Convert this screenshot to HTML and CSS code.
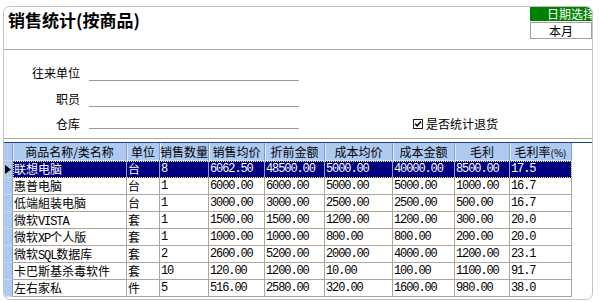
FILE: index.html
```html
<!DOCTYPE html>
<html>
<head>
<meta charset="utf-8">
<link rel="stylesheet" href="styles.css">
</head>
<body>
<div class="frame">
  <div class="top">
    <h1 class="title">销售统计(按商品)</h1>
    <div class="date">
      <div class="date-btn">日期选择</div>
      <div class="date-val">本月</div>
    </div>
  </div>
  <div class="form">
    <div class="frow"><span class="lbl">往来单位</span><span class="field"></span></div>
    <div class="frow r2"><span class="lbl">职员</span><span class="field"></span></div>
    <div class="frow r3"><span class="lbl">仓库</span><span class="field"></span>
      <label class="chk"><svg class="box" width="10" height="10" viewBox="0 0 10 10"><rect x="0.5" y="0.5" width="9" height="9" fill="#fff" stroke="#1a1a1a"/><path d="M2.2 4.8 L4.2 6.9 L7.9 2.6" fill="none" stroke="#000" stroke-width="1.6"/></svg>是否统计退货</label>
    </div>
  </div>
  <div class="grid">
    <div class="row head">
      <div class="ind"></div>
      <div class="cells">
        <div class="c w1">商品名称/类名称</div>
        <div class="c w2">单位</div>
        <div class="c w3">销售数量</div>
        <div class="c w4">销售均价</div>
        <div class="c w5">折前金额</div>
        <div class="c w6">成本均价</div>
        <div class="c w7">成本金额</div>
        <div class="c w8">毛利</div>
        <div class="c w9">毛利率<span class="pct">(%)</span></div>
      </div>
    </div>
    <div class="row sel">
      <div class="ind"><svg width="6" height="9" viewBox="0 0 6 9"><polygon points="0,0 6,4.5 0,9" fill="#000"/></svg></div>
      <div class="cells">
        <div class="c w1">联想电脑</div><div class="c w2">台</div><div class="c w3 n">8</div><div class="c w4 n">6062.50</div><div class="c w5 n">48500.00</div><div class="c w6 n">5000.00</div><div class="c w7 n">40000.00</div><div class="c w8 n">8500.00</div><div class="c w9 n">17.5</div>
      </div>
    </div>
    <div class="row">
      <div class="ind"></div>
      <div class="cells">
        <div class="c w1">惠普电脑</div><div class="c w2">台</div><div class="c w3 n">1</div><div class="c w4 n">6000.00</div><div class="c w5 n">6000.00</div><div class="c w6 n">5000.00</div><div class="c w7 n">5000.00</div><div class="c w8 n">1000.00</div><div class="c w9 n">16.7</div>
      </div>
    </div>
    <div class="row">
      <div class="ind"></div>
      <div class="cells">
        <div class="c w1">低端組装电脑</div><div class="c w2">台</div><div class="c w3 n">1</div><div class="c w4 n">3000.00</div><div class="c w5 n">3000.00</div><div class="c w6 n">2500.00</div><div class="c w7 n">2500.00</div><div class="c w8 n">500.00</div><div class="c w9 n">16.7</div>
      </div>
    </div>
    <div class="row">
      <div class="ind"></div>
      <div class="cells">
        <div class="c w1">微软<span class="lat">VISTA</span></div><div class="c w2">套</div><div class="c w3 n">1</div><div class="c w4 n">1500.00</div><div class="c w5 n">1500.00</div><div class="c w6 n">1200.00</div><div class="c w7 n">1200.00</div><div class="c w8 n">300.00</div><div class="c w9 n">20.0</div>
      </div>
    </div>
    <div class="row">
      <div class="ind"></div>
      <div class="cells">
        <div class="c w1">微软<span class="lat">XP</span>个人版</div><div class="c w2">套</div><div class="c w3 n">1</div><div class="c w4 n">1000.00</div><div class="c w5 n">1000.00</div><div class="c w6 n">800.00</div><div class="c w7 n">800.00</div><div class="c w8 n">200.00</div><div class="c w9 n">20.0</div>
      </div>
    </div>
    <div class="row">
      <div class="ind"></div>
      <div class="cells">
        <div class="c w1">微软<span class="lat">SQL</span>数据库</div><div class="c w2">套</div><div class="c w3 n">2</div><div class="c w4 n">2600.00</div><div class="c w5 n">5200.00</div><div class="c w6 n">2000.00</div><div class="c w7 n">4000.00</div><div class="c w8 n">1200.00</div><div class="c w9 n">23.1</div>
      </div>
    </div>
    <div class="row">
      <div class="ind"></div>
      <div class="cells">
        <div class="c w1">卡巴斯基杀毒软件</div><div class="c w2">套</div><div class="c w3 n">10</div><div class="c w4 n">120.00</div><div class="c w5 n">1200.00</div><div class="c w6 n">10.00</div><div class="c w7 n">100.00</div><div class="c w8 n">1100.00</div><div class="c w9 n">91.7</div>
      </div>
    </div>
    <div class="row">
      <div class="ind"></div>
      <div class="cells">
        <div class="c w1">左右家私</div><div class="c w2">件</div><div class="c w3 n">5</div><div class="c w4 n">516.00</div><div class="c w5 n">2580.00</div><div class="c w6 n">320.00</div><div class="c w7 n">1600.00</div><div class="c w8 n">980.00</div><div class="c w9 n">38.0</div>
      </div>
    </div>
  </div>
</div>
</body>
</html>
```

FILE: styles.css
```css
* { box-sizing: border-box; }
body {
  margin: 0;
  background: #fff;
  font-family: "Noto Sans CJK SC", sans-serif;
  font-size: 12px;
  color: #000;
}
.frame {
  margin: 6px 0 0 3px;
  width: 590px;
  height: 294px;
  border: 1px solid #c4c4c4;
  border-radius: 7px;
  overflow: hidden;
}
.top {
  display: flex;
  justify-content: space-between;
  height: 43px;
  border-bottom: 1px solid #aca899;
}
.title {
  margin: 0;
  padding: 2px 0 0 4px;
  font-size: 17px;
  font-weight: bold;
  line-height: 22px;
}
.date {
  width: 62px;
  display: flex;
  flex-direction: column;
  gap: 1px;
}
.date-btn {
  height: 14px;
  background: #008000;
  color: #fff;
  font-size: 12px;
  line-height: 14px;
  padding-left: 17px;
  white-space: nowrap;
  overflow: hidden;
}
.date-val {
  height: 17px;
  border: 1px solid #a0a0a0;
  text-align: center;
  line-height: 15px;
}
.form {
  height: 89px;
  padding-top: 14px;
  border-bottom: 1px solid #aca899;
}
.frow {
  display: flex;
  align-items: flex-end;
  height: 17px;
}
.r2 { margin-top: 9px; }
.r3 { margin-top: 5px; }
.lbl {
  width: 76px;
  text-align: right;
  line-height: 16px;
}
.r3 .lbl { margin-bottom: -3px; }
.field {
  width: 210px;
  height: 17px;
  margin-left: 9px;
  border-bottom: 1px solid #9b9b9b;
}
.chk {
  margin-left: 114px;
  margin-bottom: -3px;
  display: flex;
  align-items: center;
  gap: 3px;
  line-height: 16px;
}
.grid {
  margin-top: 3px;
  border-top: 1px solid #1f3f8f;
}
.row {
  display: flex;
  height: 17px;
}
.row.head { height: 18px; }
.ind {
  width: 9px;
  flex: none;
  background: #aecaf0;
  border-right: 1px solid #7f9dc9;
  border-bottom: 1px solid #c9dbf3;
  display: flex;
  align-items: center;
  justify-content: center;
}
.cells {
  display: flex;
}
.c {
  flex: none;
  height: 17px;
  padding-left: 1px;
  border-right: 1px solid #aca899;
  border-bottom: 1px solid #aca899;
  line-height: 16px;
  white-space: nowrap;
  overflow: hidden;
}
.head .c {
  height: 18px;
  background: #aecaf0;
  border-right: 1px solid #7f9dc9;
  border-bottom: 1px solid #d2e1f6;
  box-shadow: inset 1px 0 #e2ecfa;
  text-align: center;
  line-height: 17px;
  padding-left: 0;
}
.pct { font-size: 10px; }
.sel .cells {
  outline: 1px dotted #ffff90;
  outline-offset: -1px;
}
.sel .c {
  background: #000080;
  color: #fff;
  border-right-color: #9a9ac8;
  border-bottom-color: #000080;
}
.n, .lat {
  font-family: "Liberation Mono", monospace;
  font-size: 12px;
  letter-spacing: -1.1px;
}
.w1 { width: 114px; }
.w2 { width: 33px; }
.w3 { width: 49px; }
.w4 { width: 56px; }
.w5 { width: 60px; }
.w6 { width: 68px; }
.w7 { width: 62px; }
.w8 { width: 55px; }
.w9 { width: 62px; }
```
